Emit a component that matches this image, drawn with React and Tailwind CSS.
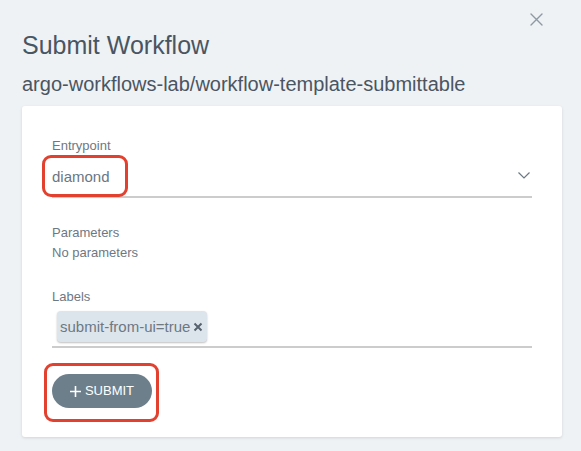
import React from "react";

export default function App() {
  return (
    <div className="relative w-[581px] h-[451px] overflow-hidden bg-[#eef2f5] px-[22px] pt-[31px] font-['Liberation_Sans',Arial,sans-serif]">
      <button className="absolute left-[530px] top-[13px] w-[13px] h-[13px] text-[#8e99a3]">
        <svg viewBox="0 0 13 13" width="13" height="13" fill="none" stroke="currentColor" strokeWidth="1.4" strokeLinecap="round">
          <path d="M1 1 L12 12 M12 1 L1 12" />
        </svg>
      </button>
      <h1 className="text-[25px] leading-[28px] text-[#4a5562]">Submit Workflow</h1>
      <div className="mt-[13px] text-[20px] leading-[24px] text-[#4a5562]">
        argo-workflows-lab/workflow-template-submittable
      </div>
      <div className="mt-[10px] w-[540px] h-[331px] rounded-[3px] bg-white px-[30px] pt-[32px] shadow-[0_1px_3px_rgba(0,0,0,0.12)]">
        <div className="text-[13px] leading-[16px] text-[#6d7883]">Entrypoint</div>
        <div className="relative flex items-center justify-between h-[44px] pt-[4px] border-b-2 border-[#cccccc]">
          <span className="text-[15px] leading-[18px] text-[#6b7682]">diamond</span>
          <svg className="mr-[2px] mb-[4px] text-[#6d7883]" viewBox="0 0 12 7" width="12" height="7" fill="none" stroke="currentColor" strokeWidth="1.2">
            <path d="M0.5 0.5 L6 6 L11.5 0.5" />
          </svg>
          <div className="absolute left-[-10px] top-[1px] w-[86px] h-[42px] rounded-[9px] border-[3px] border-[#e2412f]" />
        </div>

        <div className="mt-[25px] text-[13px] leading-[20px] text-[#6d7883]">Parameters</div>
        <div className="text-[13px] leading-[20px] text-[#6d7883]">No parameters</div>

        <div className="mt-[26px] text-[13px] leading-[16px] text-[#6d7883]">Labels</div>
        <div className="flex pt-[6px] pb-[4px] border-b-2 border-[#cccccc]">
          <div className="ml-[5px] flex items-center gap-[3px] h-[31px] pl-[3px] pr-[4px] rounded-[4px] bg-[#dde5ec] shadow-[0_1px_2px_rgba(0,0,0,0.25)]">
            <span className="text-[15px] leading-[18px] text-[#6d7883]">submit-from-ui=true</span>
            <svg className="text-[#56626d]" viewBox="0 0 10 10" width="10" height="10" fill="none" stroke="currentColor" strokeWidth="2">
              <path d="M1.5 1.5 L8.5 8.5 M8.5 1.5 L1.5 8.5" />
            </svg>
          </div>
        </div>

        <div className="relative mt-[26px] w-[100px]">
          <button className="flex items-center justify-center gap-[4px] w-[100px] h-[34px] rounded-full bg-[#6d7f8b] text-white text-[13px] leading-[16px]">
            <svg viewBox="0 0 11 11" width="11" height="11" fill="none" stroke="currentColor" strokeWidth="1.6">
              <path d="M5.5 0 V11 M0 5.5 H11" />
            </svg>
            <span>SUBMIT</span>
          </button>
          <div className="absolute left-[-8px] top-[-11px] w-[115px] h-[59px] rounded-[9px] border-[3px] border-[#e2412f]" />
        </div>
      </div>
    </div>
  );
}
